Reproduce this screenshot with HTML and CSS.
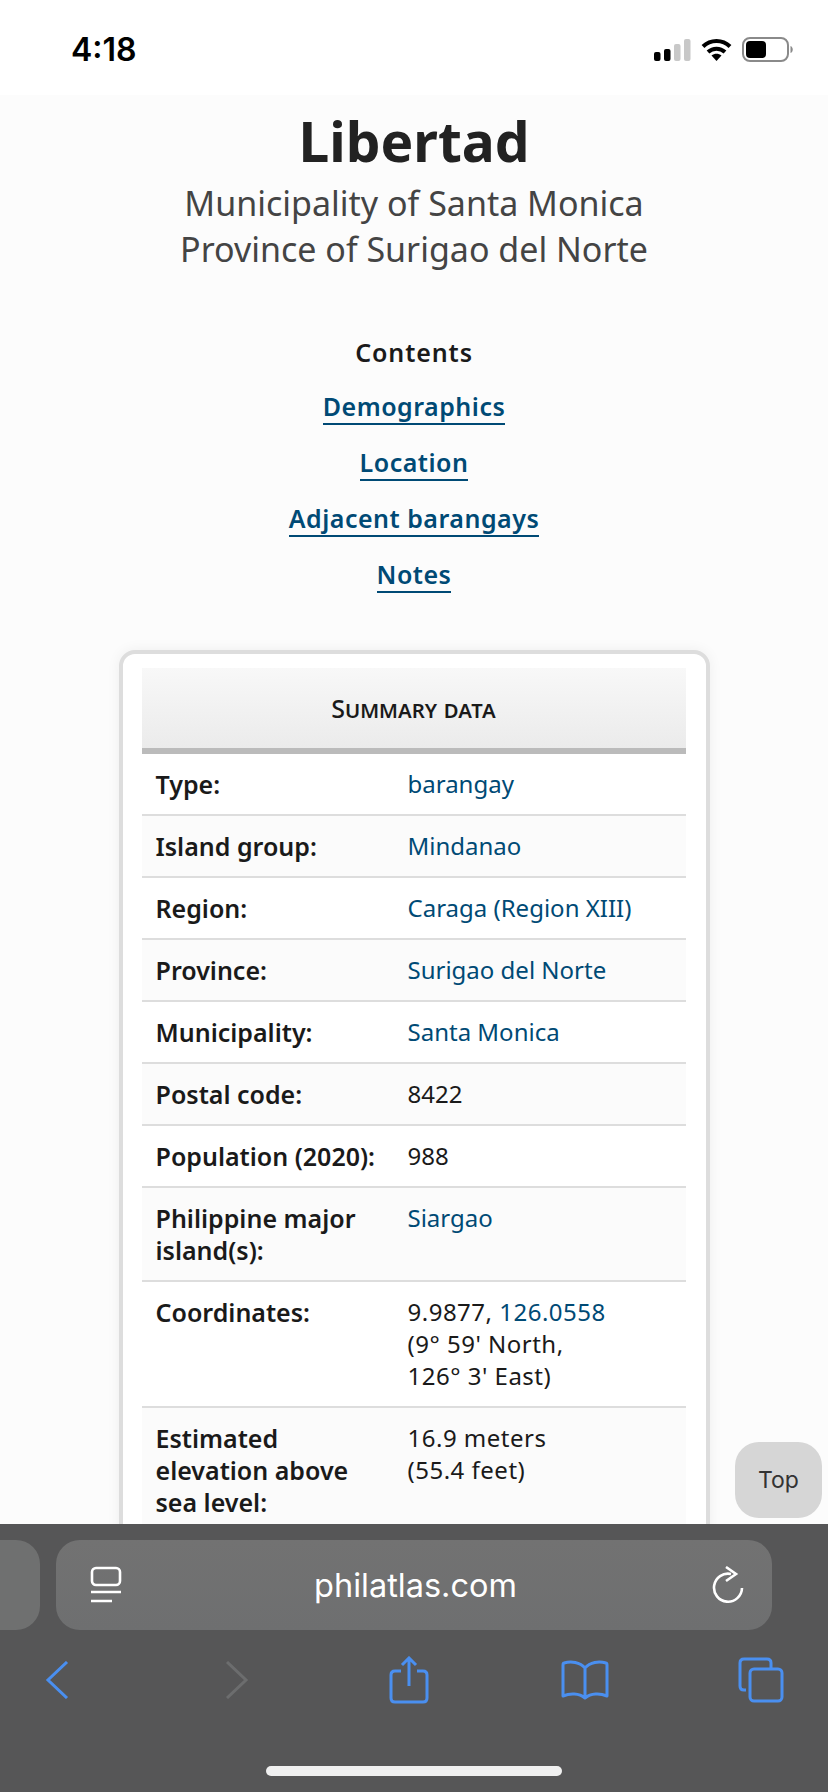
FILE: index.html
```html
<!DOCTYPE html>
<html lang="en">
<head>
  <meta charset="UTF-8">
  <title>Libertad</title>
  <meta name="viewport" content="width=device-width, initial-scale=1.0" />
  <link rel="stylesheet" href="styles.css">
</head>
<body>

  <div class="status-bar">
    <span class="time">4:18</span>
    <div class="status-icons">
      <svg width="37" height="23" viewBox="0 0 37 23">
        <rect x="0" y="14" width="6.500" height="9" rx="2" fill="#000"/>
        <rect x="10" y="11" width="6.500" height="12" rx="2" fill="#000"/>
        <rect x="20" y="6" width="6.500" height="17" rx="2" fill="#c8c8c8"/>
        <rect x="30" y="1" width="6.500" height="22" rx="2" fill="#c8c8c8"/>
      </svg>
      <svg width="31" height="23" viewBox="0 0 31 23">
        <path d="M2 8.500C9.500 1 21.500 1 29 8.500" fill="none" stroke="#000" stroke-width="4"/>
        <path d="M7 14C12 9.500 19 9.500 24 14" fill="none" stroke="#000" stroke-width="4"/>
        <path d="M10.500 17.500C13.500 15 17.500 15 20.500 17.500L15.500 23Z" fill="#000"/>
      </svg>
      <svg width="52" height="25" viewBox="0 0 52 25">
        <rect x="1" y="1" width="45" height="23" rx="7" fill="#fff" stroke="#8a8a8a" stroke-width="2"/>
        <rect x="4" y="4" width="20" height="17" rx="4" fill="#000"/>
        <path d="M48.500 9C51.500 10 51.500 15 48.500 16Z" fill="#8a8a8a"/>
      </svg>
    </div>
  </div>

  <div class="page">
    <h1>Libertad</h1>
    <p class="subtitle">Municipality of Santa Monica<br>Province of Surigao del Norte</p>

    <div class="contents">
      <div class="contents-title">Contents</div>
      <a href="#demographics">Demographics</a>
      <a href="#location">Location</a>
      <a href="#adjacent">Adjacent barangays</a>
      <a href="#notes">Notes</a>
    </div>

    <div class="card">
      <table class="summary">
        <colgroup>
          <col class="label-col">
          <col>
        </colgroup>
        <thead>
          <tr><th colspan="2">Summary data</th></tr>
        </thead>
        <tbody>
          <tr><th>Type:</th><td><a href="#">barangay</a></td></tr>
          <tr><th>Island group:</th><td><a href="#">Mindanao</a></td></tr>
          <tr><th>Region:</th><td><a href="#">Caraga (Region XIII)</a></td></tr>
          <tr><th>Province:</th><td><a href="#">Surigao del Norte</a></td></tr>
          <tr><th>Municipality:</th><td><a href="#">Santa Monica</a></td></tr>
          <tr><th>Postal code:</th><td>8422</td></tr>
          <tr><th>Population (2020):</th><td>988</td></tr>
          <tr><th>Philippine major island(s):</th><td><a href="#">Siargao</a></td></tr>
          <tr><th>Coordinates:</th><td class="spaced">9.9877, <a href="#">126.0558</a><br>(9° 59' North,<br>126° 3' East)</td></tr>
          <tr><th>Estimated elevation above sea level:</th><td class="spaced">16.9 meters<br>(55.4 feet)</td></tr>
        </tbody>
      </table>
    </div>
  </div>

  <a class="top-btn" href="#">Top</a>

  <div class="toolbar">
    <div class="address-row">
      <div class="prev-tab"></div>
      <div class="address">
        <svg width="32" height="38" viewBox="0 0 32 38">
          <rect x="2" y="2" width="28" height="17" rx="4" fill="none" stroke="#fff" stroke-width="2.600"/>
          <path d="M1 26H31M1 35H22" fill="none" stroke="#fff" stroke-width="2.600"/>
        </svg>
        <span class="url">philatlas.com</span>
        <svg width="32" height="38" viewBox="0 0 32 38">
          <path d="M19 8A14 14 0 1 0 30 22" fill="none" stroke="#fff" stroke-width="2.600"/>
          <path d="M14 1L24 8L14 15" fill="none" stroke="#fff" stroke-width="2.600"/>
        </svg>
      </div>
    </div>
    <div class="nav-row">
      <div class="nav-item">
        <svg width="24" height="38" viewBox="0 0 24 38">
          <path d="M22 1L3 19L22 37" fill="none" stroke="#4a8ff0" stroke-width="3"/>
        </svg>
      </div>
      <div class="nav-item nav-forward">
        <svg width="24" height="38" viewBox="0 0 24 38">
          <path d="M2 1L21 19L2 37" fill="none" stroke="#6c6d6e" stroke-width="3"/>
        </svg>
      </div>
      <div class="nav-item">
        <svg width="40" height="48" viewBox="0 0 40 48">
          <path d="M12 15H6Q2 15 2 19V42Q2 46 6 46H34Q38 46 38 42V19Q38 15 34 15H28" fill="none" stroke="#4a8ff0" stroke-width="3"/>
          <path d="M20 30V2M13 9L20 2L27 9" fill="none" stroke="#4a8ff0" stroke-width="3"/>
        </svg>
      </div>
      <div class="nav-item">
        <svg width="48" height="40" viewBox="0 0 48 40">
          <path d="M24 8C19 2 10 1 3 3Q2 3 2 5V36C9 33 18 33 24 38C30 33 39 33 46 36V5Q46 3 45 3C38 1 29 2 24 8ZM24 8V38" fill="none" stroke="#4a8ff0" stroke-width="3" stroke-linejoin="round"/>
        </svg>
      </div>
      <div class="nav-item">
        <svg width="46" height="46" viewBox="0 0 46 46">
          <path d="M8 33H6Q2 33 2 29V6Q2 2 6 2H29Q33 2 33 6V11" fill="none" stroke="#4a8ff0" stroke-width="3"/>
          <rect x="12" y="12" width="32" height="32" rx="4" fill="none" stroke="#4a8ff0" stroke-width="3"/>
        </svg>
      </div>
    </div>
    <div class="home-indicator"></div>
  </div>

</body>
</html>
```

FILE: styles.css
```css
* {
  box-sizing: border-box;
}

html, body {
  height: 100%;
}

body {
  margin: 0;
  position: relative;
  height: 1792px;
  overflow: hidden;
  background: #fcfcfc;
  color: #1a1a1a;
  font-family: "Noto Sans", sans-serif;
}

a {
  color: #004a75;
  text-decoration: none;
}

.status-bar {
  height: 95px;
  background: #fff;
  display: flex;
  justify-content: space-between;
  align-items: center;
  padding: 4px 34px 0 71px;
}

.time {
  font-family: Inter, sans-serif;
  font-size: 32px;
  font-weight: 600;
  color: #000;
}

.status-icons {
  display: flex;
  align-items: center;
  gap: 10px;
}

.page {
  display: flex;
  flex-direction: column;
  align-items: center;
  text-align: center;
}

h1 {
  margin: 14px 0 0;
  font-size: 55px;
  line-height: 64px;
  font-weight: 700;
  color: #222;
}

.subtitle {
  margin: 7px 0 0;
  font-size: 34px;
  line-height: 46px;
  color: #444;
}

.contents {
  margin-top: 63px;
  display: flex;
  flex-direction: column;
  align-items: center;
  gap: 20px;
  font-size: 25px;
  font-weight: 600;
  letter-spacing: 0.9px;
}

.contents-title {
  line-height: 34px;
}

.contents a {
  line-height: 34px;
  border-bottom: 2px solid #004a75;
  letter-spacing: 0.5px;
}

.card {
  margin-top: 57px;
  width: 591px;
  padding: 14px 20px 60px 19px;
  background: #fff;
  border: 4px solid #ddd;
  border-radius: 16px;
  box-shadow: 0 0 14px rgba(0, 0, 0, 0.06);
}

.summary {
  width: 100%;
  table-layout: fixed;
  border-collapse: collapse;
  text-align: left;
  font-size: 25px;
  line-height: 32px;
}

.label-col {
  width: 252px;
}

.summary thead th {
  height: 83px;
  padding: 0;
  text-align: center;
  font-variant: small-caps;
  font-weight: 500;
  background: linear-gradient(#f8f8f8, #ebebeb);
  border-bottom: 6px solid #bbb;
}

.summary tbody th {
  padding: 14px 0 14px 14px;
  vertical-align: top;
  font-weight: 600;
}

.summary td {
  padding: 14px 0 14px 14px;
  vertical-align: top;
  font-size: 24px;
}

.summary td.spaced {
  letter-spacing: 0.5px;
}

.summary tbody tr {
  border-bottom: 2px solid #ddd;
}

.summary tbody tr:nth-child(even) {
  background: #fbfbfb;
}

.top-btn {
  position: absolute;
  left: 735px;
  top: 1442px;
  width: 87px;
  height: 76px;
  display: flex;
  align-items: center;
  justify-content: center;
  border-radius: 24px;
  background: #d6d6d6;
  color: #333;
  font-family: Inter, sans-serif;
  font-size: 23px;
}

.toolbar {
  position: absolute;
  left: 0;
  right: 0;
  bottom: 0;
  height: 268px;
  background: #565657;
  padding-top: 16px;
  display: flex;
  flex-direction: column;
}

.address-row {
  display: flex;
  gap: 16px;
  height: 90px;
  padding-right: 56px;
}

.prev-tab {
  width: 40px;
  border-radius: 0 24px 24px 0;
  background: #6f7070;
}

.address {
  flex: 1;
  display: flex;
  align-items: center;
  justify-content: space-between;
  padding: 0 28px 0 34px;
  border-radius: 24px;
  background: linear-gradient(#727272, #6e6f70);
}

.url {
  margin-right: 3px;
  font-family: Inter, sans-serif;
  font-size: 32.5px;
  color: #fff;
}

.nav-row {
  display: flex;
  align-items: center;
  justify-content: space-between;
  height: 46px;
  margin-top: 27px;
  padding: 0 37px 0 27px;
}

.nav-item {
  width: 60px;
  display: flex;
  justify-content: center;
}

.nav-forward {
  padding-left: 7px;
}

.home-indicator {
  width: 296px;
  height: 10px;
  margin: auto auto 16px;
  border-radius: 5px;
  background: #f0f0f0;
}
```
